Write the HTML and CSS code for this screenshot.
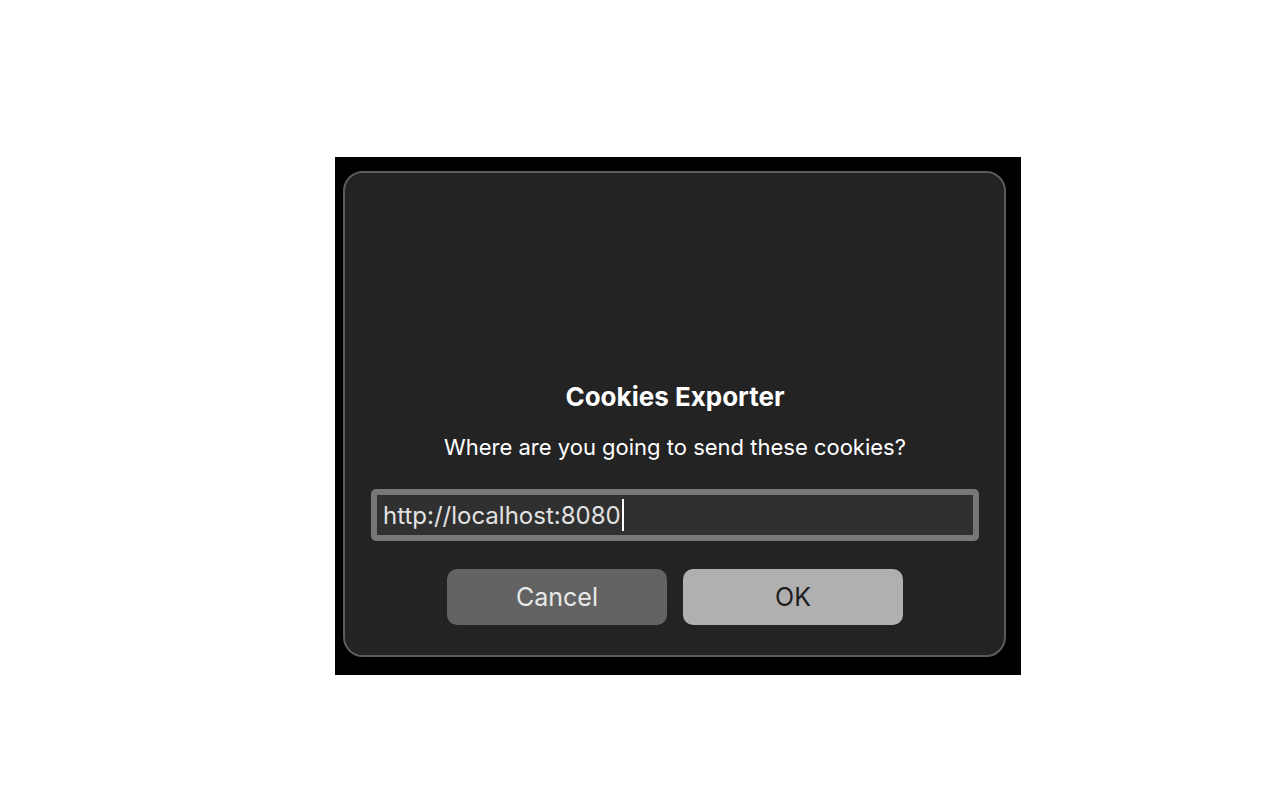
FILE: index.html
```html
<!DOCTYPE html>
<html>
<head>
<meta charset="utf-8">
<link rel="stylesheet" href="styles.css">
</head>
<body>
<div class="page">
  <div class="frame">
    <div class="dialog">
      <h1 class="title">Cookies Exporter</h1>
      <p class="message">Where are you going to send these cookies?</p>
      <div class="field"><span class="value">http://localhost:8080</span><span class="caret"></span></div>
      <div class="buttons">
        <button class="btn cancel">Cancel</button>
        <button class="btn ok">OK</button>
      </div>
    </div>
  </div>
</div>
</body>
</html>
```
FILE: styles.css
```css
html, body { margin: 0; padding: 0; background: #fff; }
body { font-family: Inter, "Noto Sans", "Liberation Sans", sans-serif; }
.page { padding: 157px 0 0 335px; }
.frame {
  width: 686px; height: 518px; box-sizing: border-box;
  background: #000;
  padding: 14px 15px 18px 8px;
}
.dialog {
  box-sizing: border-box; width: 663px; height: 486px;
  background: #232323;
  border: 2px solid #5b5b5b;
  border-radius: 20px;
  padding: 208px 25px 0 26px;
  display: flex; flex-direction: column; align-items: center;
}
.title {
  margin: 0; font-size: 26px; line-height: 32px; font-weight: 700; color: #fff;
}
.message {
  margin: 20px 0 0; font-size: 22px; line-height: 28px; color: #fff; font-weight: 400;
}
.field {
  margin-top: 28px; align-self: stretch;
  height: 52px; box-sizing: border-box;
  border: 6px solid #777;
  border-radius: 5px;
  background: #303030;
  display: flex; align-items: center;
  padding-left: 6px;
}
.value { color: #e2e2e2; font-size: 24px; line-height: 32px; position: relative; top: 1px; }
.caret { display: inline-block; width: 2px; height: 32px; background: #fff; margin-left: 1px; }
.buttons { margin-top: 28px; display: flex; gap: 16px; }
.btn {
  width: 220px; height: 56px; border: none; border-radius: 10px;
  font-family: inherit; font-size: 25px; padding: 0;
}
.cancel { background: #636363; color: #e8e8e8; }
.ok { background: #b0b0b0; color: #1e1e1e; }
```
